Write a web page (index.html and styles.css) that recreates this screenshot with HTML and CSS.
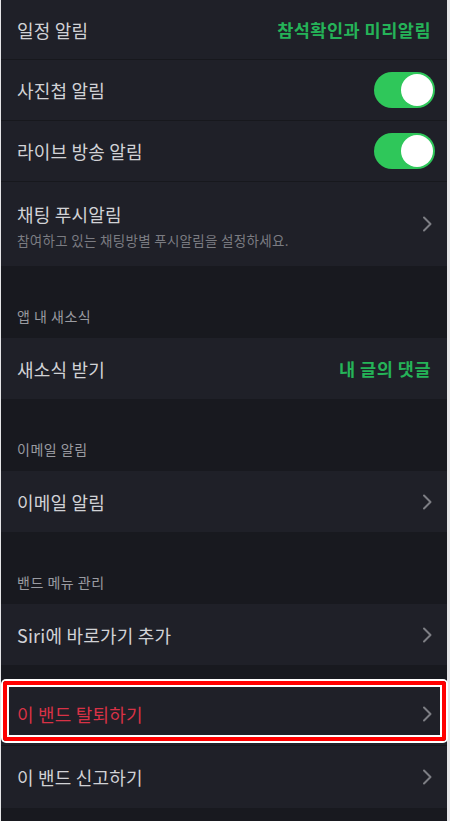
FILE: index.html
```html
<!DOCTYPE html>
<html>
<head>
  <meta charset="utf-8">
  <title>알림 설정</title>
  <link rel="stylesheet" href="styles.css">
</head>
<body>
  <div class="screen">
    <div class="group">
      <div class="row row-first">
        <span class="label">일정 알림</span>
        <span class="value">참석확인과 미리알림</span>
      </div>
      <div class="row">
        <span class="label">사진첩 알림</span>
        <span class="toggle on"><span class="knob"></span></span>
      </div>
      <div class="row">
        <span class="label">라이브 방송 알림</span>
        <span class="toggle on"><span class="knob"></span></span>
      </div>
      <div class="row row-tall">
        <div class="text">
          <span class="label">채팅 푸시알림</span>
          <span class="desc">참여하고 있는 채팅방별 푸시알림을 설정하세요.</span>
        </div>
        <svg class="chevron" viewBox="0 0 10 16"><path d="M2 1.5 L8.5 8 L2 14.5" /></svg>
      </div>
    </div>

    <div class="section-head">앱 내 새소식</div>
    <div class="group">
      <div class="row row-solo">
        <span class="label">새소식 받기</span>
        <span class="value">내 글의 댓글</span>
      </div>
    </div>

    <div class="section-head">이메일 알림</div>
    <div class="group">
      <div class="row row-solo">
        <span class="label">이메일 알림</span>
        <svg class="chevron" viewBox="0 0 10 16"><path d="M2 1.5 L8.5 8 L2 14.5" /></svg>
      </div>
    </div>

    <div class="section-head">밴드 메뉴 관리</div>
    <div class="group">
      <div class="row row-solo">
        <span class="label">Siri에 바로가기 추가</span>
        <svg class="chevron" viewBox="0 0 10 16"><path d="M2 1.5 L8.5 8 L2 14.5" /></svg>
      </div>
    </div>

    <div class="spacer"></div>
    <div class="group">
      <div class="row row-big highlight">
        <span class="label danger">이 밴드 탈퇴하기</span>
        <svg class="chevron" viewBox="0 0 10 16"><path d="M2 1.5 L8.5 8 L2 14.5" /></svg>
      </div>
      <div class="row row-big">
        <span class="label">이 밴드 신고하기</span>
        <svg class="chevron" viewBox="0 0 10 16"><path d="M2 1.5 L8.5 8 L2 14.5" /></svg>
      </div>
    </div>
  </div>
</body>
</html>
```

FILE: styles.css
```css
body {
  margin: 0;
  background-color: #e6e6e8;
  font-family: "Noto Sans CJK KR", "Noto Sans", sans-serif;
}

.screen {
  margin-left: 1px;
  width: 446px;
  min-height: 821px;
  background-color: #18191f; /* gap between groups */
}

.group {
  background-color: #1f2028;
}

.row {
  position: relative;
  display: flex;
  align-items: center;
  justify-content: space-between;
  height: 60px;
  padding: 0 15px 0 16px;
  border-bottom: 1px solid #17181d;
}

.row:last-child {
  border-bottom: none;
}

.row-first {
  height: 59px;
}

.row-tall {
  height: 84px;
}

.row-solo {
  height: 61px;
}

.row-big {
  height: 62px;
}

.label {
  font-size: 18px;
  color: #d1d2d6;
  letter-spacing: 0.2px;
}

.label.danger {
  color: #d83246;
}

.value {
  font-size: 17.5px;
  font-weight: bold;
  color: #25b358;
  letter-spacing: 0.5px;
  margin-right: 1px;
}

.text {
  display: flex;
  flex-direction: column;
  gap: 3px;
  padding-top: 2px;
}

.desc {
  font-size: 13.5px;
  color: #7b7c82;
  letter-spacing: 0.3px;
}

.toggle {
  display: flex;
  align-items: center;
  width: 61px;
  height: 36px;
  margin-right: -3px;
  border-radius: 18px;
  background-color: #2fc75a;
  padding: 2px;
  box-sizing: border-box;
}

.toggle.on {
  justify-content: flex-end;
}

.knob {
  width: 32px;
  height: 32px;
  border-radius: 50%;
  background-color: #ffffff;
}

.chevron {
  width: 10px;
  height: 16px;
  fill: none;
  stroke: #7d7e84;
  stroke-width: 2;
  stroke-linecap: round;
  stroke-linejoin: round;
}

.section-head {
  height: 72px;
  padding: 40px 0 0 16px;
  box-sizing: border-box;
  font-size: 14px;
  line-height: 20px;
  letter-spacing: 0.5px;
  color: #9a9ba1;
}

.spacer {
  height: 18px;
}

/* red marker drawn over the leave row */
.highlight::after {
  content: '';
  position: absolute;
  top: -2px;
  left: 2px;
  right: 1px;
  bottom: 4px;
  border: 4px solid #ff0000;
  border-radius: 3px;
  box-shadow: 0 0 0 2px #ffffff, inset 0 0 0 2px #ffffff;
}
```
